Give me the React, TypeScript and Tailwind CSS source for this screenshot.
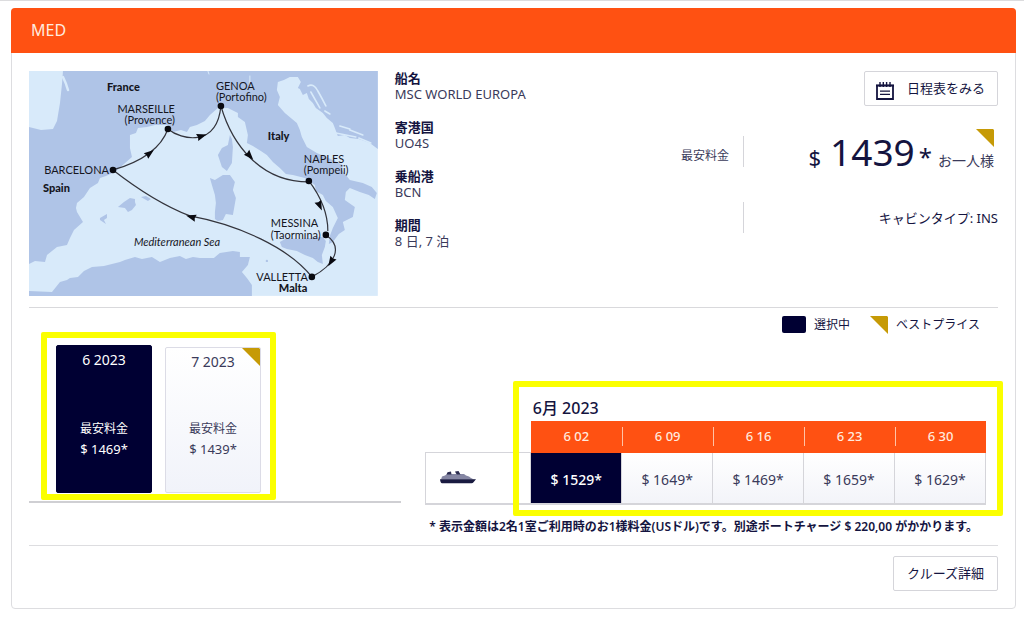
import React, { useState } from 'react';
import clsx from 'clsx';

interface Month {
  label: string;
  price: number;
  best?: boolean;
}

interface Departure {
  date: string;
  price: number;
}

const details = [
  { label: '船名', value: 'MSC WORLD EUROPA' },
  { label: '寄港国', value: 'UO4S' },
  { label: '乗船港', value: 'BCN' },
  { label: '期間', value: '8 日, 7 泊' },
];

const months: Month[] = [
  { label: '6 2023', price: 1469 },
  { label: '7 2023', price: 1439, best: true },
];

const departures: Departure[] = [
  { date: '6 02', price: 1529 },
  { date: '6 09', price: 1649 },
  { date: '6 16', price: 1469 },
  { date: '6 23', price: 1659 },
  { date: '6 30', price: 1629 },
];

const ports = [
  [84, 99],
  [139, 58],
  [192, 35],
  [280, 110],
  [297, 164],
  [283, 206],
];

// Arrow heads on the route: x, y, rotation
const arrows = [
  [121, 82, -38],
  [173, 65, -18],
  [221, 85, 48],
  [291, 135, 66],
  [302, 191, 122],
  [162, 146, 196],
];

function BestPriceMark({ className }: { className?: string }) {
  return (
    <svg viewBox="0 0 18 18" className={clsx('h-[18px] w-[18px] shrink-0', className)} aria-hidden="true">
      <path d="M0 0H17L18 1V18Z" fill="#c69a06" />
    </svg>
  );
}

function ScheduleIcon() {
  return (
    <svg viewBox="0 0 20 20" className="mt-1 h-5 w-5 shrink-0" fill="none" stroke="#14143f" aria-hidden="true">
      <path d="M2 4.5V18H18V4.5" strokeWidth="1.8" />
      <path d="M1 4.5H19" strokeWidth="2.2" />
      <path d="M5 1V6M8.3 1V6M11.6 1V6M15 1V6" strokeWidth="1.4" />
      <path d="M5 10.2H15M5 13.4H15" strokeWidth="1.2" />
    </svg>
  );
}

function ShipIcon() {
  return (
    <svg viewBox="0 0 36 14" className="h-[14px] w-9" role="img" aria-label="客船">
      <path d="M1 8.6L2 5.5L5 4.5L7 3H24L26 4.5L29 5.5L31 7L34 8.6Z" fill="#8586a3" />
      <path d="M6.5 3.4L7.5 1.2L11 .6L11.5 3.4ZM16 2.6L15 .6L18.5 0L20.5 3.4H17Z" fill="#2b2c50" />
      <path d="M0 8.2H36L33.5 11.2C33 11.9 32.4 12.2 31.6 12.2H2C1 12.2 .3 10.6 0 8.2Z" fill="#191a40" />
    </svg>
  );
}

function RouteMap() {
  return (
    <svg viewBox="0 0 349 225" className="block w-[36%] shrink-0 self-start" role="img" aria-label="航路図">
      <rect width="349" height="225" fill="#d8eafa" />
      <g fill="#afc4e7">
        <path d="M34 0H349V78L341 72L330 68L321 67L316 64L309 65L306 57L304 52L298 47L294 42L287 37L284 32L280 28L278 22L274 24L271 18L269 17L272 11L269 6L261 6L255 9L249 11L248 19L251 26L249 34L256 42L268 52L271 59L273 66L278 76L288 82L304 89L314 94L313 99L321 109L334 112L343 116L348 122L346 128L340 124L331 121L321 117L317 121L316 129L326 136L324 146L314 151L316 159L310 163L304 171L300 173L301 165L304 157L309 147L304 136L297 130L294 124L287 120L286 114L276 107L264 104L257 103L251 97L244 91L238 84L232 80L224 75L218 72L219 64L216 51L209 46V42L199 37L189 37L181 44L176 50L168 54L161 56L158 61L152 59L144 61L139 54H134L126 54L118 56L109 57L107 62L101 64V77L103 86L95 93L86 101L77 105L71 107L69 112L61 117L55 126L48 132L47 137L48 141L54 151L45 159L41 167L38 174L28 176L18 184L16 191L6 190L0 193V56L12 59L24 58L28 50L31 32L33 13Z" />
        <path d="M0 220L23 221L31 211L38 209L41 207L49 206L55 200L63 196L75 195L91 191L96 189L106 186L113 188L123 186L131 191L141 187L151 185L157 188L164 186L171 187L185 187L191 182L204 180L211 181V186L221 186L219 194L213 201L218 207L223 214V225H0Z" />
        <path d="M181 107L186 109L194 104L201 104L206 111L204 119L207 127L204 144L197 143L194 149L189 150L186 148V141L187 132L186 124L183 114Z" />
        <path d="M201 64L203 68L204 76L203 92L198 100L193 96L191 90L189 84L193 77L199 74Z" />
        <path d="M251 171L258 167L270 168L294 166L297 170L296 176L293 184L294 193L289 191L284 187L276 184L268 180L258 178L253 176Z" />
        <path d="M89 136L95 131L101 127L106 128V131L107 134L103 139L99 141L96 137Z" />
        <path d="M112 126L117 125L122 128L119 130Z" />
        <path d="M71 147L78 143V147L75 149L77 153L71 149Z" />
        <circle cx="238" cy="190" r="1.2" />
      </g>
      <g fill="none" stroke="#d8eafa" strokeLinecap="round">
        <path d="M34 6Q37 12 39 19" strokeWidth="2.5" />
        <path d="M279 15Q285 12 289 20Q293 27 297 35M282 21L291 37M296 40L301 43" strokeWidth="1.6" />
        <path d="M311 55L321 58M307 62L327 66M321 59L334 64M330 67L342 72" strokeWidth="1.6" />
        <path d="M221 5V15M179 0L180 3" strokeWidth="1" />
      </g>

      <g fill="none" stroke="#33343c" strokeWidth="1.2">
        <path d="M84 99Q129 86 139 58" />
        <path d="M139 58C152 69 188 77 192 35" />
        <path d="M192 35C203 73 231 111 280 111" />
        <path d="M280 110Q299 135 299 160" />
        <path d="M297 164C315 176 306 194 283 206" />
        <path d="M283 206C260 177 210 154 161 145Q125 131 84 99" />
      </g>
      <g fill="#090a10">
        {arrows.map(([x, y, angle]) => (
          <path key={x} d="M5 0L-5 3.6L-4 0L-5 -3.6Z" transform={`translate(${x} ${y}) rotate(${angle})`} />
        ))}
        {ports.map(([x, y]) => (
          <circle key={x} cx={x} cy={y} r="3.3" />
        ))}
      </g>

      <g className="font-['Lato',sans-serif] text-[11px]" fill="#15161e">
        <text x="187" y="19">GENOA</text>
        <text x="187" y="30">(Portofino)</text>
        <text x="146" y="42" textAnchor="end">MARSEILLE</text>
        <text x="146" y="53" textAnchor="end">(Provence)</text>
        <text x="80" y="103" textAnchor="end">BARCELONA</text>
        <text x="275" y="92">NAPLES</text>
        <text x="275" y="103">(Pompeii)</text>
        <text x="242" y="156">MESSINA</text>
        <text x="242" y="168">(Taormina)</text>
        <text x="279" y="210" textAnchor="end">VALLETTA</text>
        <text x="105" y="175" className="italic">Mediterranean Sea</text>
        <g className="font-black">
          <text x="78" y="20">France</text>
          <text x="239" y="69">Italy</text>
          <text x="14" y="121">Spain</text>
          <text x="250" y="221">Malta</text>
        </g>
      </g>
    </svg>
  );
}

function Summary() {
  return (
    <section className="flex border-b border-[#d9d9dc] pb-[11px]">
      <RouteMap />
      <dl className="-mt-px ml-[17px] space-y-[17px] text-[13px] leading-4">
        {details.map((item) => (
          <div key={item.label}>
            <dt className="font-bold">{item.label}</dt>
            <dd className="text-[#3a3a5a]">{item.value}</dd>
          </div>
        ))}
      </dl>

      <div className="ml-auto flex flex-col items-end">
        <button
          type="button"
          className="flex h-[35px] items-center gap-3 rounded-xs border border-[#d5d5da] bg-white px-3 pl-[10px] text-[13px]"
        >
          <ScheduleIcon />
          日程表をみる
        </button>
        <div className="mt-[27px] flex h-[46px] items-center">
          <span className="text-[12px] text-[#3a3a5a]">最安料金</span>
          <div className="relative ml-[14px] flex w-[255px] items-center justify-end pr-1">
            <span className="absolute top-[7px] left-0 h-[31px] border-l border-[#d5d5da]" />
            <p className="flex items-baseline leading-[46px] whitespace-nowrap">
              <span className="mr-[9px] text-[22px]">$</span>
              <span className="text-[37px]">1439</span>
              <span className="ml-1 text-[24px]">*</span>
              <span className="ml-[6px] text-[14px] text-[#3a3a5a]">お一人様</span>
            </p>
            <BestPriceMark className="absolute top-0 right-1" />
          </div>
        </div>
        <div className="mt-[23px] flex h-[31px] w-[255px] items-center justify-end border-l border-[#d5d5da] pt-[3px] text-[13px]">
          キャビンタイプ: INS
        </div>
      </div>
    </section>
  );
}

function Legend() {
  return (
    <div className="mt-2 flex items-center justify-end pr-[18px] text-[12px] leading-[18px]">
      <span className="mr-2 h-[17px] w-6 rounded-xs bg-[#000033]" />
      選択中
      <BestPriceMark className="mr-2 ml-5" />
      ベストプライス
    </div>
  );
}

export default function App() {
  const [month, setMonth] = useState(0);
  const [departure, setDeparture] = useState(0);

  return (
    <div
      lang="ja"
      className="border-t border-[#dcdcde] bg-white px-2 pt-[7px] pb-2 pl-[11px] font-['Noto_Sans','Noto_Sans_CJK_JP',sans-serif] text-[#14143f]"
    >
      <article className="rounded-sm border border-[#dddde0]">
        <h1 className="-mx-px -mt-px rounded-t-sm bg-[#ff5112] px-5 text-[16px] leading-[45px] text-[#ffeadf]">MED</h1>

        <div className="px-[17px] pt-[18px] pb-[17px]">
          <Summary />
          <Legend />

          <div className="mt-[11px] grid grid-cols-[13fr_20fr] items-start gap-6 border-b border-[#dddde0] pb-[9px]">
            {/* Month tabs */}
            <div className="flex border-b-2 border-[#cfcfd3] pb-2 pl-[27px]">
              <div className="relative flex items-end gap-[13px]">
                {months.map((item, i) => (
                  <button
                    key={item.label}
                    type="button"
                    onClick={() => setMonth(i)}
                    className={clsx(
                      'relative flex w-24 flex-col items-center rounded-xs border',
                      i === month
                        ? 'h-[148px] border-[#000033] bg-[#000033] text-white'
                        : 'h-[146px] border-[#dcdce6] bg-linear-to-b from-white to-[#f1f3fa] text-[#3a3a5a]'
                    )}
                  >
                    <span className="mt-1 text-[14px] leading-5">{item.label}</span>
                    <span className="mt-auto text-[12px] leading-5">最安料金</span>
                    <span className="mb-[33px] text-[13px] leading-5">$ {item.price}*</span>
                    {item.best && <BestPriceMark className="absolute top-0 right-0" />}
                  </button>
                ))}
                <span className="pointer-events-none absolute -inset-x-[15px] -top-[13px] -bottom-[7px] rounded-xs border-[6px] border-[#fbff00]" />
              </div>
            </div>

            {/* Departure dates */}
            <div className="relative pt-[51px] pr-3">
              <table className="w-full table-fixed border-collapse text-center">
                <thead>
                  <tr>
                    <td className="w-[105px]" />
                    <th colSpan={5} className="pl-[2px] text-left text-[16px] leading-[25px] font-medium">
                      6月 2023
                    </th>
                  </tr>
                  <tr>
                    <td />
                    {departures.map((item, i) => (
                      <th key={item.date} scope="col" className="h-8 bg-[#ff5112] text-[13px] font-medium text-[#ffeadf]">
                        <span className={clsx('block leading-[19px]', i > 0 && 'border-l border-[#ffc3a6]')}>{item.date}</span>
                      </th>
                    ))}
                  </tr>
                </thead>
                <tbody>
                  <tr>
                    <th scope="row" className="border border-b-2 border-[#d5d5da] pl-[14px]">
                      <ShipIcon />
                    </th>
                    {departures.map((item, i) => (
                      <td key={item.date} className="border border-t-0 border-b-2 border-[#d5d5da]">
                        <button
                          type="button"
                          onClick={() => setDeparture(i)}
                          className={clsx(
                            'block h-[50px] w-full pt-1 text-[14px]',
                            i === departure
                              ? 'bg-[#000033] font-medium text-white'
                              : 'bg-linear-to-b from-white to-[#f3f4f9] text-[#3a3a5a]'
                          )}
                        >
                          $ {item.price}*
                        </button>
                      </td>
                    ))}
                  </tr>
                </tbody>
              </table>
              <span className="pointer-events-none absolute top-9 -right-[5px] bottom-5 left-[88px] rounded-xs border-[6px] border-[#fbff00]" />
              <p className="-mr-3 mt-[13px] pl-1 text-[12px] leading-[18px] font-semibold whitespace-nowrap">
                * 表示金額は2名1室ご利用時のお1様料金(USドル)です。別途ポートチャージ $ 220,00 がかかります。
              </p>
            </div>
          </div>

          <div className="mt-[10px] flex justify-end">
            <button type="button" className="h-[35px] rounded-xs border border-[#d5d5da] bg-white px-[13px] text-[13px]">
              クルーズ詳細
            </button>
          </div>
        </div>
      </article>
    </div>
  );
}
